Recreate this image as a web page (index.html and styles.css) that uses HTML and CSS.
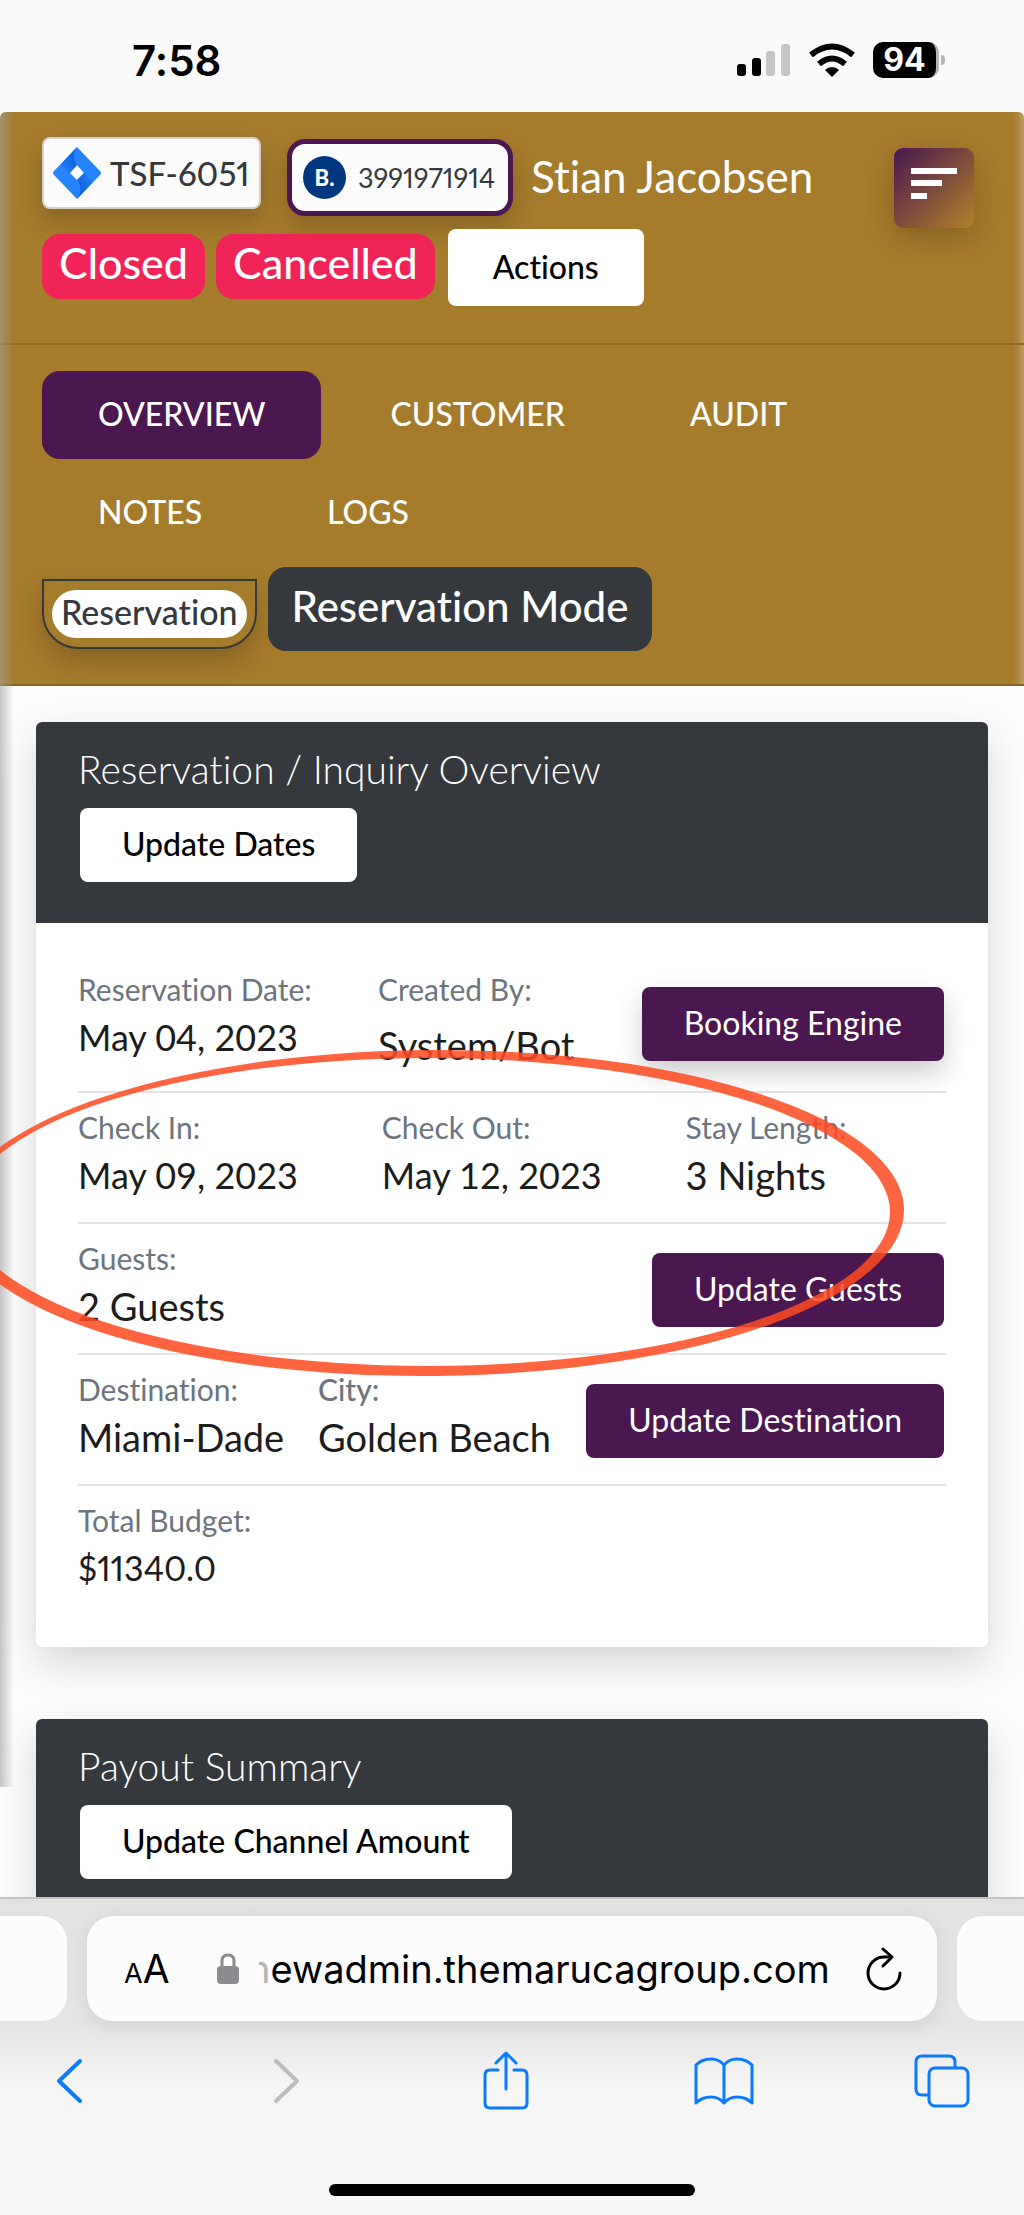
FILE: index.html
```html
<!DOCTYPE html>
<html lang="en">
<head>
    <meta charset="UTF-8">
    <meta name="viewport" content="width=device-width, initial-scale=1.0">
    <title>Reservation Overview</title>
    <link rel="stylesheet" href="styles.css">
</head>
<body>
    <!-- Status bar -->
    <div class="status-bar">
        <span class="time">7:58</span>
        <div class="status-icons">
            <svg width="54" height="34" viewBox="0 0 54 34">
                <rect x="0" y="21" width="9" height="12" rx="3" fill="#000"/>
                <rect x="15" y="15" width="9" height="18" rx="3" fill="#000"/>
                <rect x="29" y="8" width="9" height="25" rx="3" fill="#c6c6c6"/>
                <rect x="44" y="1" width="9" height="32" rx="3" fill="#c6c6c6"/>
            </svg>
            <svg width="46" height="34" viewBox="0 0 46 34">
                <g fill="none" stroke="#000" stroke-width="6">
                    <path d="M2 12 Q23 -5 44 12"/>
                    <path d="M10 21 Q23 10 36 21"/>
                </g>
                <path d="M16 27 Q23 21 30 27 L23 34Z" fill="#000"/>
            </svg>
            <div class="battery">94</div>
        </div>
    </div>

    <main class="page">
        <header class="top">
            <div class="guest-bar">
                <div class="guest-info">
                    <a class="chip jira" href="#">
                        <svg width="48" height="52" viewBox="0 0 48 52">
                            <defs>
                                <linearGradient id="jiraTop" x1="1" y1="0" x2="0" y2="1">
                                    <stop offset="0.2" stop-color="#0f5fd8"/>
                                    <stop offset="1" stop-color="#2684ff"/>
                                </linearGradient>
                                <linearGradient id="jiraBottom" x1="0" y1="1" x2="1" y2="0">
                                    <stop offset="0.2" stop-color="#0f5fd8"/>
                                    <stop offset="1" stop-color="#2684ff"/>
                                </linearGradient>
                            </defs>
                            <path d="M24 0 L47 24 Q49 26 47 28 L24 52 L1 28 Q-1 26 1 24Z M24 18 L17 26 L24 33 L31 26Z" fill="#2684ff" fill-rule="evenodd"/>
                            <path d="M24 0 Q17 9 24 18 L17 26 L8 17Z" fill="url(#jiraTop)"/>
                            <path d="M24 52 Q31 43 24 33 L31 26 L40 35Z" fill="url(#jiraBottom)"/>
                        </svg>
                        <span>TSF-6051</span>
                    </a>
                    <a class="chip booking" href="#">
                        <span class="booking-logo">B.</span>
                        <span>3991971914</span>
                    </a>
                    <span class="guest-name">Stian Jacobsen</span>
                </div>
                <div class="guest-status">
                    <span class="badge">Closed</span>
                    <span class="badge">Cancelled</span>
                    <button type="button" class="btn btn-light actions">Actions</button>
                </div>
                <button type="button" class="menu-button" aria-label="Menu">
                    <svg width="46" height="32" viewBox="0 0 46 32" fill="#fff">
                        <rect width="46" height="6"/>
                        <rect y="12" width="31" height="6"/>
                        <rect y="25" width="16" height="6"/>
                    </svg>
                </button>
            </div>

            <nav class="tabs">
                <a class="tab active" href="#">OVERVIEW</a>
                <a class="tab" href="#">CUSTOMER</a>
                <a class="tab" href="#">AUDIT</a>
                <a class="tab" href="#">NOTES</a>
                <a class="tab" href="#">LOGS</a>
            </nav>

            <div class="mode-row">
                <div class="type-box"><span>Reservation</span></div>
                <div class="mode">Reservation Mode</div>
            </div>
        </header>

        <section class="card">
            <div class="card-header">
                <h2>Reservation / Inquiry Overview</h2>
                <button type="button" class="btn btn-light">Update Dates</button>
            </div>
            <div class="card-body">
                <div class="row row-created">
                    <div>
                        <div class="label">Reservation Date:</div>
                        <div class="value date">May 04, 2023</div>
                    </div>
                    <div>
                        <div class="label">Created By:</div>
                        <div class="value value-tall">System/Bot</div>
                    </div>
                    <button type="button" class="btn btn-purple raised">Booking Engine</button>
                </div>
                <div class="row row-stay">
                    <div>
                        <div class="label">Check In:</div>
                        <div class="value date">May 09, 2023</div>
                    </div>
                    <div>
                        <div class="label">Check Out:</div>
                        <div class="value date">May 12, 2023</div>
                    </div>
                    <div>
                        <div class="label">Stay Length:</div>
                        <div class="value">3 Nights</div>
                    </div>
                </div>
                <div class="row row-guests">
                    <div>
                        <div class="label">Guests:</div>
                        <div class="value">2 Guests</div>
                    </div>
                    <button type="button" class="btn btn-purple">Update Guests</button>
                </div>
                <div class="row row-destination">
                    <div>
                        <div class="label">Destination:</div>
                        <div class="value">Miami-Dade</div>
                    </div>
                    <div>
                        <div class="label strong">City:</div>
                        <div class="value">Golden Beach</div>
                    </div>
                    <button type="button" class="btn btn-purple">Update Destination</button>
                </div>
                <div class="row">
                    <div>
                        <div class="label">Total Budget:</div>
                        <div class="value amount">$11340.0</div>
                    </div>
                </div>
            </div>
        </section>

        <section class="card">
            <div class="card-header">
                <h2>Payout Summary</h2>
                <button type="button" class="btn btn-light">Update Channel Amount</button>
            </div>
        </section>

        <div class="side-shadow"></div>

        <!-- Hand drawn marker around the dates -->
        <svg class="marker" width="920" height="340" viewBox="0 0 920 340">
            <path fill="#ff4b22" fill-opacity="0.86" fill-rule="evenodd"
                d="M-44 173 A474 163 -0.4 0 1 904 163 A474 163 -0.4 0 1 -44 173Z
                   M-34 167 A462 154 0 0 1 890 167 A462 154 0 0 1 -34 167Z"/>
        </svg>
    </main>

    <!-- Browser controls -->
    <footer class="browser-bar">
        <div class="address-row">
            <div class="side-tab"></div>
            <div class="address">
                <button type="button" class="text-size" aria-label="Text size"><small>A</small>A</button>
                <svg width="22" height="32" viewBox="0 0 22 32">
                    <path d="M5 15 V8 Q5 2 11 2 Q17 2 17 8 V15" fill="none" stroke="#8a8a8f" stroke-width="3"/>
                    <rect y="13" width="22" height="18" rx="4" fill="#8a8a8f"/>
                </svg>
                <span class="url"><span class="faded">n</span>ewadmin.themarucagroup.com</span>
                <button type="button" aria-label="Reload">
                    <svg width="38" height="44" viewBox="0 0 38 44" fill="none" stroke="#000" stroke-width="3" stroke-linecap="round" stroke-linejoin="round">
                        <path d="M26 10 H19 A16 16 0 1 0 35 26"/>
                        <path d="M18 2 L27 10 L18 19"/>
                    </svg>
                </button>
            </div>
            <div class="side-tab"></div>
        </div>
        <div class="toolbar">
            <button type="button" aria-label="Back">
                <svg width="28" height="46" viewBox="0 0 28 46" fill="none" stroke="#0a7aff" stroke-width="4" stroke-linecap="round" stroke-linejoin="round"><path d="M25 3 L4 23 L25 43"/></svg>
            </button>
            <button type="button" aria-label="Forward" disabled>
                <svg width="28" height="46" viewBox="0 0 28 46" fill="none" stroke="#bdbdbf" stroke-width="4" stroke-linecap="round" stroke-linejoin="round"><path d="M3 3 L24 23 L3 43"/></svg>
            </button>
            <button type="button" aria-label="Share">
                <svg width="48" height="60" viewBox="0 0 48 60" fill="none" stroke="#0a7aff" stroke-width="3" stroke-linecap="round" stroke-linejoin="round">
                    <path d="M16 19 H8 Q3 19 3 24 V52 Q3 57 8 57 H40 Q45 57 45 52 V24 Q45 19 40 19 H32"/>
                    <path d="M24 38 V3 M14 12 L24 2 L34 12"/>
                </svg>
            </button>
            <button type="button" aria-label="Bookmarks">
                <svg width="60" height="50" viewBox="0 0 60 50" fill="none" stroke="#0a7aff" stroke-width="3" stroke-linejoin="round">
                    <path d="M30 9 Q25 3 17 3 Q8 3 2 9 V47 Q8 41 17 41 Q25 41 30 47 Q35 41 43 41 Q52 41 58 47 V9 Q52 3 43 3 Q35 3 30 9 V47"/>
                </svg>
            </button>
            <button type="button" aria-label="Tabs">
                <svg width="56" height="54" viewBox="0 0 56 54" fill="none" stroke="#0a7aff" stroke-width="3">
                    <path d="M14 41 H8 Q2 41 2 35 V8 Q2 2 8 2 H35 Q41 2 41 8 V14"/>
                    <rect x="15" y="14" width="39" height="38" rx="6"/>
                </svg>
            </button>
        </div>
        <div class="home-indicator"></div>
    </footer>
</body>
</html>
```

FILE: styles.css
```css
* {
    box-sizing: border-box;
}

body {
    margin: 0;
    height: 100vh;
    display: flex;
    flex-direction: column;
    font-family: Lato, "Open Sans", sans-serif;
    font-variant-ligatures: none;
    background-color: #fafafa;
    color: #1c1c1c;
}

a {
    color: inherit;
    text-decoration: none;
}

button {
    font-family: inherit;
    font-variant-ligatures: none;
    border: none;
    background: none;
    padding: 0;
    cursor: pointer;
}

svg {
    display: block;
    flex: none;
}

/* Status bar */
.status-bar {
    flex: none;
    height: 112px;
    padding: 8px 85px 0 132px;
    display: flex;
    align-items: center;
    justify-content: space-between;
    font-family: Inter, sans-serif;
}

.time {
    font-size: 42px;
    font-weight: 600;
    color: #000;
}

.status-icons {
    display: flex;
    align-items: center;
    gap: 18px;
}

.battery {
    position: relative;
    width: 66px;
    height: 36px;
    line-height: 36px;
    border-radius: 10px;
    border-right: 3px solid #b5b5b5;
    background-color: #000;
    color: #fff;
    font-size: 32px;
    font-weight: 700;
    text-align: center;
}

.battery::after {
    content: "";
    position: absolute;
    right: -9px;
    top: 13px;
    width: 4px;
    height: 10px;
    border-radius: 0 5px 5px 0;
    background-color: #b5b5b5;
}

/* Page */
.page {
    position: relative;
    flex: 1;
    min-height: 0;
    overflow: hidden;
    background-color: #fdfdfd;
    border-radius: 6px 6px 0 0;
}

.top {
    height: 574px;
    margin-bottom: 36px;
    background-color: #a57b2c;
    border-bottom: 2px solid #8c6620;
    box-shadow: inset -12px 0 12px -10px #c9b58d;
}

.guest-bar {
    position: relative;
    height: 233px;
    padding: 25px 42px 0;
    border-bottom: 2px solid #916a23;
}

.guest-info {
    display: flex;
    align-items: flex-start;
    height: 92px;
    white-space: nowrap;
}

.chip {
    display: flex;
    align-items: center;
    background-color: #fcfcfc;
    color: #35393d;
    font-variant-numeric: proportional-nums;
    box-shadow: 0 12px 24px rgba(0, 0, 0, 0.18);
}

.jira {
    height: 72px;
    width: 219px;
    padding: 0 9px;
    gap: 9px;
    margin-right: 26px;
    border: 2px solid #d6d0c8;
    border-radius: 8px;
    font-size: 33px;
    font-weight: 500;
}

.booking {
    height: 77px;
    width: 226px;
    margin: 2px 18px 0 0;
    padding: 0 11px;
    gap: 12px;
    border: 5px solid #4a1750;
    border-radius: 18px;
    font-size: 27px;
}

.booking-logo {
    width: 43px;
    height: 43px;
    line-height: 43px;
    border-radius: 50%;
    background-color: #003580;
    color: #fff;
    font-size: 22px;
    font-weight: 900;
    text-align: center;
    flex: none;
}

.guest-name {
    color: #fff;
    font-size: 44px;
    line-height: 78px;
    font-weight: 400;
}

.guest-status {
    display: flex;
    align-items: flex-start;
}

.badge {
    height: 65px;
    line-height: 58px;
    margin: 5px 11px 0 0;
    padding: 0 17px;
    border-radius: 18px;
    background-color: #f02457;
    color: #fff;
    font-size: 43px;
    font-weight: 500;
}

.menu-button {
    position: absolute;
    top: 36px;
    right: 50px;
    width: 80px;
    height: 80px;
    padding: 0 0 8px 17px;
    border-radius: 9px;
    background-image: linear-gradient(135deg, #4a1750, #b08029);
    box-shadow: 0 10px 28px rgba(0, 0, 0, 0.2);
}

.tabs {
    display: flex;
    flex-wrap: wrap;
    column-gap: 13px;
    row-gap: 10px;
    padding: 26px 130px 0 42px;
}

.tab {
    height: 88px;
    line-height: 85px;
    padding: 0 56px;
    border-radius: 18px;
    color: #fff;
    font-size: 32px;
    font-weight: 500;
}

.active {
    background-color: #4a1750;
}

.mode-row {
    display: flex;
    align-items: flex-start;
    gap: 11px;
    padding: 10px 42px 0;
}

.type-box {
    margin-top: 12px;
    padding: 9px 8px;
    border: 2px solid #35393d;
    border-radius: 0 0 36px 36px;
    box-shadow: 0 14px 26px rgba(0, 0, 0, 0.18);
}

.type-box span {
    display: block;
    height: 48px;
    line-height: 43px;
    padding: 0 9px;
    border-radius: 24px;
    background-color: #fff;
    color: #35393d;
    font-size: 34px;
    font-weight: 500;
}

.mode {
    height: 84px;
    line-height: 78px;
    padding: 0 24px;
    border-radius: 18px;
    background-color: #35393d;
    color: #fff;
    font-size: 42px;
    font-weight: 500;
}

/* Cards */
.card {
    margin: 0 36px 72px;
    border-radius: 6px;
    background-color: #fff;
    box-shadow: 0 16px 40px rgba(0, 0, 0, 0.16);
}

.card-header {
    height: 201px;
    padding: 22px 42px 0;
    border-radius: 6px 6px 0 0;
    background-color: #35393d;
}

.card-header h2 {
    margin: 0 0 14px;
    color: #fff;
    font-size: 39px;
    line-height: 50px;
    font-weight: 300;
}

.card-header .btn {
    margin-left: 2px;
}

.card-body {
    padding: 32px 42px 30px;
}

.btn {
    height: 74px;
    padding: 0 42px 3px;
    border-radius: 8px;
    font-size: 32px;
}

.btn-light {
    background-color: #fff;
    color: #000;
    font-weight: 500;
}

.actions {
    height: 77px;
    margin-left: 2px;
    padding: 0 45px 3px;
}

.btn-purple {
    margin-right: 2px;
    background-color: #4a1750;
    color: #fff;
}

.raised {
    box-shadow: 0 12px 26px rgba(0, 0, 0, 0.2);
}

.row {
    display: grid;
    align-items: start;
    min-height: 131px;
    padding: 16px 0 14px;
    border-bottom: 2px solid #e2e4e5;
}

.row:last-child {
    border-bottom: none;
}

.row .btn {
    align-self: center;
    justify-self: end;
}

.row-created {
    grid-template-columns: 300px 1fr auto;
}

.row-stay {
    grid-template-columns: 35% 1fr 30%;
}

.row-guests {
    grid-template-columns: 1fr auto;
}

.row-destination {
    grid-template-columns: 240px 1fr auto;
}

.label {
    margin-bottom: 6px;
    color: #6c757d;
    font-size: 30px;
    line-height: 36px;
}

.strong {
    font-weight: 500;
}

.value {
    font-size: 38px;
    line-height: 48px;
}

.value-tall {
    line-height: 64px;
}

.date {
    font-size: 36px;
}

.amount {
    font-size: 34px;
    font-variant-numeric: proportional-nums;
}

/* Overlays */
.side-shadow {
    position: absolute;
    left: 0;
    top: 0;
    bottom: 110px;
    width: 14px;
    background-image: linear-gradient(to right, rgba(160, 160, 160, 0.6), rgba(190, 190, 190, 0));
}

.marker {
    position: absolute;
    left: 0;
    top: 933px;
}

/* Browser controls */
.browser-bar {
    flex: none;
    height: 318px;
    border-top: 2px solid #c4c4c4;
    background-image: linear-gradient(#e2e2e2, #e4e4e4 40%, #f6f6f6 60%);
}

.address-row {
    display: flex;
    gap: 20px;
    padding-top: 17px;
}

.side-tab {
    width: 67px;
    height: 105px;
    border-radius: 0 26px 26px 0;
    background-color: #fcfcfc;
}

.side-tab:last-child {
    border-radius: 26px 0 0 26px;
}

.address {
    flex: 1;
    display: flex;
    align-items: center;
    padding: 0 34px 0 37px;
    border-radius: 26px;
    background-color: #fcfcfc;
    box-shadow: 0 4px 20px rgba(0, 0, 0, 0.08);
    font-family: Inter, sans-serif;
    color: #000;
}

.text-size {
    font-family: Inter, sans-serif;
    font-size: 39px;
    margin-right: 47px;
}

.text-size small {
    font-size: 27px;
}

.url {
    flex: 1;
    margin-left: 20px;
    font-size: 38px;
    white-space: nowrap;
}

/* start of the address runs out of the field */
.faded {
    display: inline-flex;
    justify-content: flex-end;
    width: 12px;
    overflow: hidden;
    color: #b5b5b5;
}

.toolbar {
    display: flex;
    align-items: center;
    justify-content: space-between;
    height: 120px;
    padding: 0 52px 0 39px;
}

.toolbar button {
    width: 60px;
}

.toolbar svg {
    margin: 0 auto;
}

.home-indicator {
    width: 366px;
    height: 12px;
    margin: 43px auto 0;
    border-radius: 6px;
    background-color: #000;
}
```
